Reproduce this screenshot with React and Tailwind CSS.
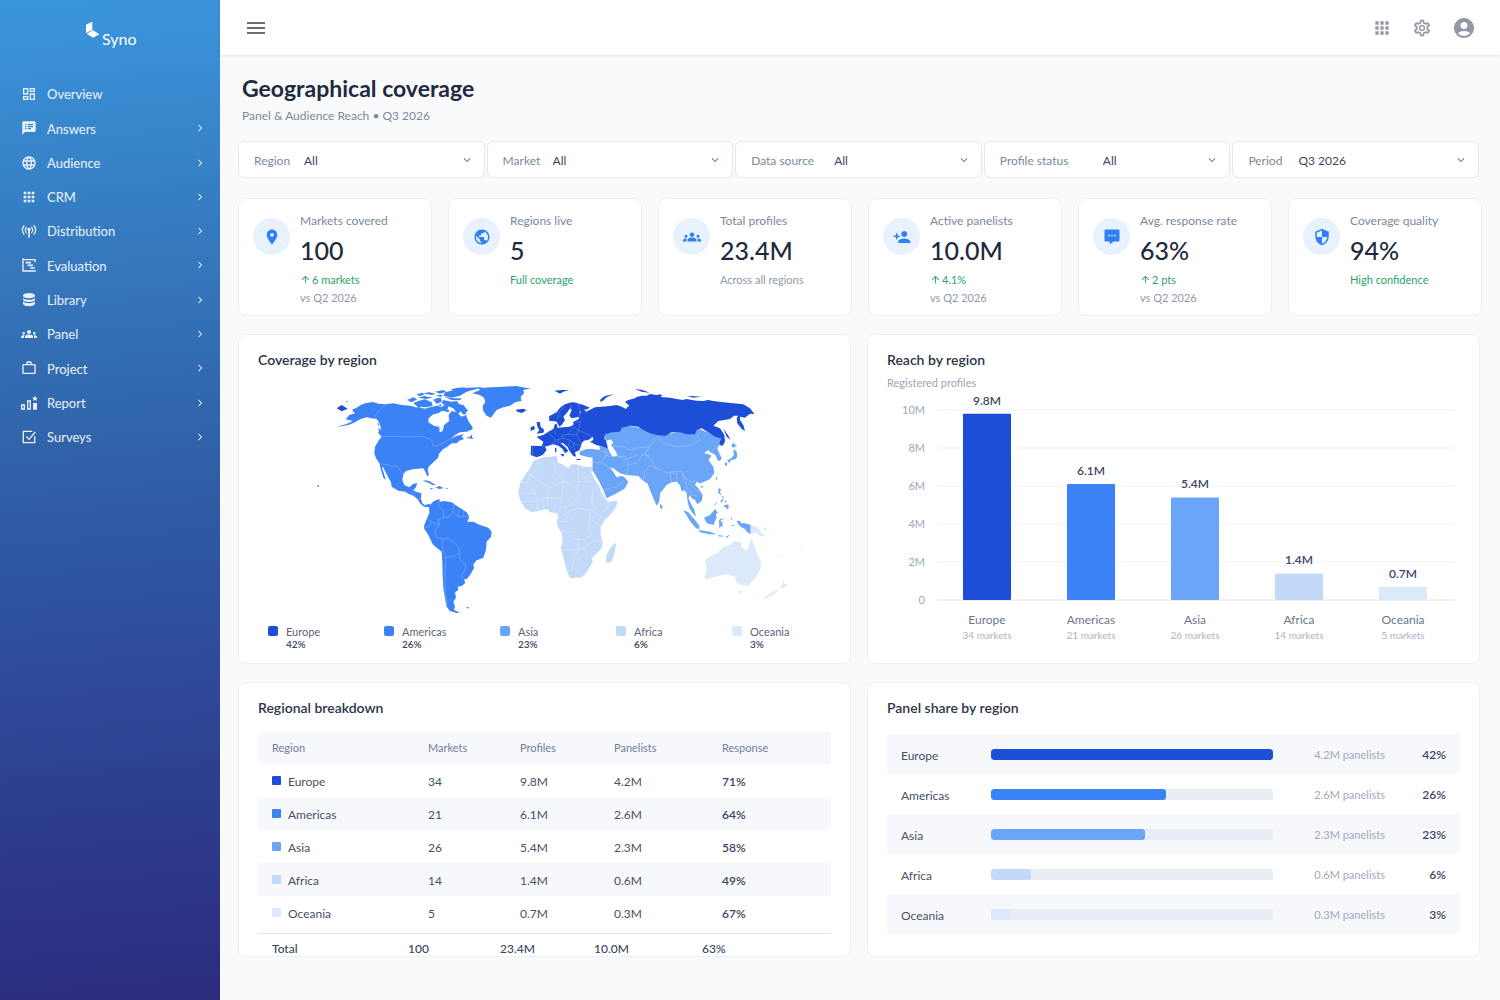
import { Fragment } from "react";
import {
  MdAccountCircle,
  MdApps,
  MdArrowUpward,
  MdChevronRight,
  MdGroups,
  MdKeyboardArrowDown,
  MdLanguage,
  MdLocationOn,
  MdMenu,
  MdOutlineDashboard,
  MdOutlineSettings,
  MdPersonAdd,
  MdPublic,
  MdSecurity,
  MdSpeakerNotes,
  MdWorkOutline
} from "react-icons/md";

// Icons that the Material set does not have
const IconDistribution = ({ className }) => (
  <svg className={className} viewBox="0 0 24 24" fill="none" stroke="currentColor" strokeWidth="1.8" strokeLinecap="round">
    <path d="M4.500 4C1.500 8 1.500 13 4.500 17M19.500 4c3 4 3 9 0 13M8 6.500c-1.800 2.500-1.800 5.500 0 8M16 6.500c1.800 2.500 1.800 5.500 0 8" />
    <circle cx="12" cy="9.500" r="1.600" fill="currentColor" />
    <path d="M12 10v11" strokeWidth="2.400" />
  </svg>
);

const IconEvaluation = ({ className }) => (
  <svg className={className} viewBox="0 0 24 24" fill="none" stroke="currentColor" strokeWidth="2">
    <path d="M3 2v19h19M3 4h18v4" />
    <path d="M7 8.500h8M10 12.500h8M14 16.500h7" strokeWidth="2.600" />
  </svg>
);

const IconLibrary = ({ className }) => (
  <svg className={className} viewBox="0 0 24 24" fill="currentColor">
    <ellipse cx="12" cy="5.500" rx="9" ry="4" />
    <path d="M3 8.500c1.500 4 16.500 4 18 0v3c-1.500 4.500-16.500 4.500-18 0zM3 14c1.500 4 16.500 4 18 0v3.500c-1.500 5-16.500 5-18 0z" />
  </svg>
);

const IconReport = ({ className }) => (
  <svg className={className} viewBox="0 0 24 24" fill="none" stroke="currentColor" strokeWidth="2">
    <path d="M1 15h4v6H1zM10 9h4v12h-4z" />
    <path d="M18 12h6v10h-6z" fill="currentColor" stroke="none" />
    <path d="M21 1l1.300 2.800 3 .3-2.300 2 .7 3-2.700-1.600L18.300 9l.7-3-2.300-2 3-.3z" fill="currentColor" stroke="none" />
  </svg>
);

const IconSurveys = ({ className }) => (
  <svg className={className} viewBox="0 0 24 24" fill="none" stroke="currentColor" strokeWidth="2">
    <path d="M17 3.500H3.500v17h17V11" />
    <path d="M8 11l4 4.500 9.500-11" />
  </svg>
);

const IconBubble = ({ className }) => (
  <svg className={className} viewBox="0 0 24 24" fill="currentColor">
    <path
      fillRule="evenodd"
      d="M3.500 2h17A1.500 1.500 0 0 1 22 3.500v13a1.500 1.500 0 0 1-1.500 1.500H14l-5 4v-4H3.500A1.500 1.500 0 0 1 2 16.500v-13A1.500 1.500 0 0 1 3.500 2zM7 9v2h2V9zm4 0v2h2V9zm4 0v2h2V9z"
    />
  </svg>
);

const navItems = [
  { label: "Overview", icon: MdOutlineDashboard, leaf: true },
  { label: "Answers", icon: MdSpeakerNotes },
  { label: "Audience", icon: MdLanguage },
  { label: "CRM", icon: MdApps },
  { label: "Distribution", icon: IconDistribution },
  { label: "Evaluation", icon: IconEvaluation },
  { label: "Library", icon: IconLibrary },
  { label: "Panel", icon: MdGroups },
  { label: "Project", icon: MdWorkOutline },
  { label: "Report", icon: IconReport },
  { label: "Surveys", icon: IconSurveys }
];

const filters = [
  { id: "region", label: "Region", value: "All", slot: "w-[50px]" },
  { id: "market", label: "Market", value: "All", slot: "w-[50px]" },
  { id: "source", label: "Data source", value: "All", slot: "w-[83px]" },
  { id: "status", label: "Profile status", value: "All", slot: "w-[103px]" },
  { id: "period", label: "Period", value: "Q3 2026", slot: "w-[50px]" }
];

const kpis = [
  { label: "Markets covered", value: "100", icon: MdLocationOn, delta: "6 markets", note: "vs Q2 2026" },
  { label: "Regions live", value: "5", icon: MdPublic, status: "Full coverage" },
  { label: "Total profiles", value: "23.4M", icon: MdGroups, note: "Across all regions" },
  { label: "Active panelists", value: "10.0M", icon: MdPersonAdd, delta: "4.1%", note: "vs Q2 2026" },
  { label: "Avg. response rate", value: "63%", icon: IconBubble, delta: "2 pts", note: "vs Q2 2026" },
  { label: "Coverage quality", value: "94%", icon: MdSecurity, status: "High confidence" }
];

const regions = [
  { name: "Europe", markets: 34, profiles: 9.8, panelists: "4.2M", response: "71%", share: 42, bg: "bg-[#1d4ed8]", fill: "fill-[#1d4ed8]" },
  { name: "Americas", markets: 21, profiles: 6.1, panelists: "2.6M", response: "64%", share: 26, bg: "bg-[#3b82f6]", fill: "fill-[#3b82f6]" },
  { name: "Asia", markets: 26, profiles: 5.4, panelists: "2.3M", response: "58%", share: 23, bg: "bg-[#6ba5f8]", fill: "fill-[#6ba5f8]" },
  { name: "Africa", markets: 14, profiles: 1.4, panelists: "0.6M", response: "49%", share: 6, bg: "bg-[#c3d9f9]", fill: "fill-[#c3d9f9]" },
  { name: "Oceania", markets: 5, profiles: 0.7, panelists: "0.3M", response: "67%", share: 3, bg: "bg-[#dce9fb]", fill: "fill-[#dce9fb]" }
];

// Land outlines, one path per region
const land = {
  americas:
    "M107 133L118 120 135 115 126 105 145 95 152 90 165 85 190 81 205 86 225 88 250 85 275 90 300 92 318 97 330 98 345 101 360 97 380 92 395 96 405 88 415 95 412 105 395 108 385 115 370 118 356 130 355 142 372 152 388 156 389 172 398 168 402 150 418 138 416 120 425 108 440 112 455 125 468 120 475 138 487 155 488 163 470 170 450 172 435 180 425 190 440 182 462 178 455 185 462 192 448 197 440 205 425 205 412 215 400 222 388 235 384 248 370 262 356 275 353 285 357 300 352 304 346 290 340 280 325 281 312 282 300 285 288 288 280 298 277 315 283 330 298 337 308 328 322 324 317 338 310 345 318 350 334 355 333 372 337 385 345 391 358 386 362 395 350 397 340 394 330 385 322 372 310 362 298 358 285 350 265 347 245 335 243 322 232 302 219 275 216 278 222 296 228 315 220 308 213 285 208 264 198 250 193 235 195 215 207 195 215 185 204 173 213 160 208 145 200 132 185 130 170 127 150 133 135 142 115 150 95 154 80 155 110 147 128 138Z" +
    "M400 75L425 80 440 78 448 88 460 90 475 108 466 112 470 118 458 118 452 109 445 116 436 108 430 100 410 92 395 85ZM310 84L325 78 345 73 365 82 368 92 350 97 335 95 326 98ZM291 75L310 67 322 73 305 82ZM400 62L405 52 430 46 420 42 460 39 520 36 500 42 480 47 470 50 450 62 425 68ZM325 68L345 62 352 66 370 66 350 72ZM370 74L380 70 392 68 396 80 380 86ZM338 55L358 52 378 56 365 60ZM375 50L400 45 408 50 390 56ZM376 62L394 59 396 66ZM398 98L410 100 420 108 412 112 400 106ZM320 58L338 53 342 60 328 63ZM382 90L396 88 392 94ZM402 66L430 70 455 70 450 76 425 75ZM425 42L445 38 470 37 450 41ZM202 140L208 150 204 152ZM205 156L210 164 206 168Z" +
    "M487 55L510 45 505 40 545 37 580 35 620 33 645 38 662 40 640 45 642 55 632 65 634 78 615 82 600 92 575 98 560 105 550 118 543 128 530 122 520 108 518 92 526 82 522 68 510 60ZM468 188L480 186 485 178 487 188 491 193ZM338 318L348 316 360 320 378 330 368 330 350 321ZM376 338L388 333 400 339 390 342ZM360 340h8v3h-8zM407 340h6v2h-6zM22 331h5v4h-5zM469 697h8v3h-8zM356 318h4v3h-4zM108 78h6v2h-6z" +
    "M357 392L372 378 388 372 390 380 402 378 425 382 440 392 455 402 470 412 478 425 472 440 490 440 510 450 535 458 545 470 543 485 530 500 528 525 520 548 500 556 490 568 492 580 480 600 470 612 463 612 465 625 455 633 443 635 445 645 435 652 438 668 430 680 435 695 432 705 450 713 440 714 420 708 410 695 405 670 400 640 398 600 397 560 395 530 380 518 368 508 355 480 342 460 343 450 350 432 358 415Z",
  africa:
    "M675 255L700 247 740 243 743 255 742 262 760 270 775 280 785 268 800 268 820 275 845 276 847 285 843 292 855 315 868 335 875 355 888 372 895 380 923 377 918 395 905 415 885 435 872 455 872 480 878 505 875 520 855 540 846 549 848 560 840 575 828 595 815 607 780 610 772 590 765 570 760 545 752 520 758 495 755 475 743 455 740 440 745 425 740 415 720 412 710 402 685 408 665 412 645 400 630 375 625 355 630 325 645 300 660 280 668 262ZM887 560L890 540 900 520 915 503 918 510 912 540 903 562 892 563Z",
  asia:
    "M808 230L835 220 870 225 868 212 893 218 890 200 880 180 935 150 1000 160 1070 178 1160 160 1230 185 1230 205 1222 222 1235 250 1230 258 1222 255 1218 242 1206 233 1200 232 1195 225 1182 235 1195 238 1205 242 1195 255 1210 275 1213 295 1200 312 1180 322 1170 325 1160 320 1155 330 1165 340 1178 360 1175 378 1162 388 1155 375 1145 370 1140 360 1135 370 1145 390 1153 405 1158 425 1150 418 1138 400 1133 380 1130 355 1122 345 1115 350 1110 330 1100 320 1085 322 1070 330 1050 355 1048 380 1040 392 1030 370 1018 340 1012 325 1000 318 985 303 950 300 930 295 910 280 900 278 910 290 920 307 933 303 942 305 955 320 945 340 920 355 890 370 880 345 865 315 847 285 848 262 848 248 830 245 810 240Z" +
    "M1264 210L1272 203 1275 210 1282 212 1268 218ZM1272 222L1280 230 1282 243 1278 252 1265 255 1256 260 1250 258 1265 248 1272 240 1270 230ZM1244 262L1252 264 1250 273 1246 272ZM1254 260L1262 259 1258 264ZM1217 305L1222 308 1219 318ZM1172 333L1180 333 1175 340ZM1225 340L1233 342 1230 352 1236 360 1225 355ZM1234 362L1242 366 1238 370ZM1230 382L1236 373 1242 372 1236 380ZM1244 374L1250 380 1246 384ZM1238 394L1246 390 1255 388 1256 400 1250 403 1248 397ZM1208 395L1222 380 1220 386ZM1050 385L1058 395 1055 403 1050 398ZM1120 405L1135 412 1155 435 1168 452 1168 462 1158 460 1140 438ZM1165 465L1180 467 1200 470 1220 478 1200 478 1170 472ZM1225 480L1240 482 1238 485 1225 484ZM1246 486L1260 478 1252 488ZM1182 428L1200 420 1215 402 1223 412 1218 418 1220 428 1210 450 1190 445ZM1227 435L1232 432 1245 430 1233 436 1232 441 1240 440 1236 446 1240 456 1234 452 1228 460ZM1264 425L1267 436 1262 432ZM1262 450L1276 450 1268 453ZM1280 438L1290 437 1293 445 1302 444 1322 450 1322 478 1312 472 1305 462 1293 456 1286 449Z",
  europe:
    "M662 240L663 212 695 213 700 200 685 190 680 185 700 180 715 170 730 162 735 147 741 148 742 158 760 157 778 155 790 150 790 140 806 132 812 110 800 90 815 88 840 98 828 104 822 102 828 110 840 104 855 97 875 95 900 93 920 90 935 95 948 102 952 96 958 92 945 80 955 75 975 70 980 66 995 62 1010 62 1020 57 1040 60 1050 58 1058 62 1050 66 1080 68 1100 72 1120 75 1128 72 1160 77 1180 78 1195 75 1210 78 1240 82 1270 85 1300 88 1320 100 1333 117 1322 116 1315 120 1305 128 1290 125 1290 135 1300 150 1305 168 1295 162 1282 145 1280 130 1285 122 1272 122 1260 132 1225 138 1210 152 1230 160 1243 180 1245 200 1238 212 1228 210 1232 190 1215 185 1200 175 1175 160 1160 165 1155 178 1130 178 1110 172 1085 172 1065 183 1040 180 1020 175 1000 165 985 155 960 152 935 158 930 170 905 172 885 178 882 190 895 205 893 220 870 212 850 210 840 200 850 195 848 185 835 195 820 198 812 215 808 226 795 232 798 245 790 243 780 230 772 215 760 205 750 203 765 215 775 228 765 235 758 222 745 212 730 208 715 212 705 215 710 225 698 240 680 247 670 243Z" +
    "M718 138L717 124 740 112 750 98 765 88 785 82 800 83 815 90 810 110 810 125 785 130 778 122 785 105 780 100 772 112 760 125 765 135 755 150 748 155 740 140 730 138ZM680 140L690 142 692 155 703 165 700 173 680 176 688 165 682 155ZM662 157L672 152 675 162 662 168ZM617 104L640 101 650 106 635 114 622 110ZM733 47L755 45 778 45 760 50 750 56 742 52ZM870 80L872 72 885 63 912 57 890 67 878 78ZM975 42L995 44 1020 53 995 50ZM1130 62L1175 65 1150 68ZM1240 160L1255 182 1262 195 1250 185ZM80 100L95 90 113 101 95 109ZM735 218h4v14h-4zM750 238L763 237 760 245ZM800 252h12v3h-12z",
  oceania:
    "M1185 555L1200 545 1225 532 1240 515 1260 510 1272 498 1295 503 1293 515 1310 528 1318 510 1324 490 1335 515 1342 540 1353 560 1350 585 1335 610 1315 632 1295 630 1280 622 1275 605 1250 597 1215 605 1190 612 1183 608 1190 590ZM1284 650L1298 646 1292 656ZM1419 614L1424 626 1432 630 1416 641 1410 637 1418 628ZM1404 643L1396 655 1380 663 1366 671 1361 667 1382 655ZM1322 450L1345 458 1350 468 1365 485 1350 482 1340 474 1322 478ZM1355 464L1372 457 1366 466ZM1472 524L1485 518 1478 525ZM1410 540L1418 544 1412 545ZM1380 470L1392 478 1384 475Z"
};

const seas =
  "M888 197L903 193 910 203 903 210 918 230 922 243 908 245 898 230 893 215ZM814 206L825 196 840 200 866 214 845 222 816 222Z";

const borders = {
  americas:
    "M218 184L340 185 365 195 370 215 400 205 415 195 440 182M193 125L222 92M193 125L210 145M213 266L235 270 245 275 258 272 268 283 278 297M308 345L305 360M318 352L312 362M333 372L322 372M388 374L385 395 400 405 402 428 420 425 430 410 432 385M402 428L385 432 388 450 375 465 378 485 397 492 415 490 435 505 447 520 448 535 430 545 407 548 398 525 397 492M407 548L405 600 405 650 412 690M448 535L450 555 468 570 465 585 455 600 458 612M350 432L365 440 388 450M345 458L358 455 365 440M430 410L445 425 478 425M447 402L445 425M460 405L460 425",
  africa:
    "M628 322L650 322 660 300 675 290 685 275 680 258M660 300L720 340 760 318M730 255L740 290 760 318 800 340M800 340L805 320 805 270M805 320L850 320M650 322L675 355 630 355M675 355L680 380 710 365 720 340M760 318L758 350 755 370 710 368M640 380L665 378 680 380 683 408M700 372L700 404M712 368L715 405M800 340L805 365 790 385 805 400 840 405M755 370L750 400 745 425M755 425L780 405 805 400M740 440L765 440 778 410M755 468L785 470 790 490 805 495 805 525 758 525M840 405L838 430 835 455 845 480 825 490 805 495M840 405L865 420 885 435M850 340L845 380 855 400M838 430L872 455M865 355L885 370 900 390 880 410M805 525L825 515 845 500 875 500M805 525L790 560 785 580M790 560L830 540 825 520M790 385L760 400",
  asia:
    "M900 215L940 215 960 225 985 218 1020 215 1038 190M1040 182L1060 205 1100 215 1140 212 1170 195 1160 178M1020 215L1005 235 1025 255 1040 280 1070 293 1095 290 1115 290 1125 310 1145 320 1160 318M920 245L945 245 955 270 950 300M955 270L985 262 995 240 1020 240M1000 318L1005 290 1020 270 1040 280M848 262L875 262 890 240 900 245M875 262L900 280M885 228L890 245M880 345L920 335 940 320M1085 322L1080 295 1100 295 1102 320M1115 290L1130 330 1132 355M1135 325L1160 345 1170 350M905 218L940 255 985 240M1138 340L1150 360 1165 365M870 225L895 235M1205 228L1222 215",
  europe:
    "M695 213L712 216M668 215L668 240M715 172L728 185 738 195 728 208M735 165L735 178M738 195L760 190 755 180 775 178 790 155M760 190L780 195 790 205 812 212M775 178L800 180 805 165 820 172 845 185M790 155L805 165 812 140 795 140M800 180L810 200M745 192L745 205M780 195L775 212 790 220M742 132L748 110 765 95M785 100L782 90M802 85L810 110 808 125M790 205L795 225"
};

function Sidebar() {
  return (
    <aside className="w-[220px] shrink-0 bg-[linear-gradient(175deg,#3b96dc_0%,#3579bf_25%,#3061a8_46%,#2e4796_70%,#2c2b7d_100%)] text-white">
      <div className="flex h-[78px] items-start pl-[85px] pt-[21px]">
        <svg className="h-[17px] w-[15px]" viewBox="0 0 45 51" fill="currentColor">
          <path d="M3 11L22 2v25L3 36z" />
          <path d="M5 38l19-10 19 12-19 10z" />
        </svg>
        <span className="mt-2 pl-0.5 text-base leading-5">Syno</span>
      </div>
      <nav className="flex h-[377px] flex-col">
        {navItems.map(({ label, icon: Icon, leaf }) => (
          <a key={label} href="#" className="flex flex-1 items-center pl-[21px] pr-[13px] text-[13px] text-white/90">
            <Icon className="mb-0.5 mr-2.5 size-4 shrink-0" />
            <span className="flex-1">{label}</span>
            {!leaf && <MdChevronRight className="mb-0.5 size-3.5 opacity-80" />}
          </a>
        ))}
      </nav>
    </aside>
  );
}

function TopBar() {
  return (
    <header className="flex h-[55px] items-center justify-between bg-white px-6 text-[#9498a5] shadow-[0_1px_3px_rgba(15,23,42,0.1)]">
      <button type="button" aria-label="Toggle menu" className="text-[#686d78]">
        <MdMenu className="size-6" />
      </button>
      <div className="flex items-center gap-5">
        <button type="button" aria-label="Apps">
          <MdApps className="size-5" />
        </button>
        <button type="button" aria-label="Settings">
          <MdOutlineSettings className="size-5" />
        </button>
        <button type="button" aria-label="Account">
          <MdAccountCircle className="size-6" />
        </button>
      </div>
    </header>
  );
}

function Filter({ id, label, value, slot }) {
  return (
    <div className="flex h-[37px] items-center rounded-md border border-[#e4e9f0] bg-white pl-[15px] text-xs">
      <label htmlFor={id} className={`${slot} shrink-0 pt-0.5 text-[#7c889b]`}>
        {label}
      </label>
      <div className="relative min-w-0 flex-1">
        <select id={id} defaultValue={value} className="w-full appearance-none bg-transparent pt-0.5 text-[#3b4663] outline-none">
          <option>{value}</option>
        </select>
        <MdKeyboardArrowDown className="pointer-events-none absolute right-2.5 top-0.5 size-3.5 text-[#7c889b]" />
      </div>
    </div>
  );
}

function Kpi({ label, value, icon: Icon, delta, status, note }) {
  return (
    <div className="flex h-[118px] gap-2.5 rounded-lg border border-[#edf0f5] bg-white pl-3.5 pt-3.5">
      <span className="mt-[5px] flex size-[37px] items-center justify-center rounded-full bg-[#e8f1fe] text-[#2f80f5]">
        <Icon className="size-[18px]" />
      </span>
      <div className="text-[11px] text-[#9099ab]">
        <div className="text-xs leading-4 text-[#7c889b]">{label}</div>
        <div className="mb-[3px] text-[25px] font-medium leading-[42px] text-[#1e2a3d]">{value}</div>
        {(delta || status) && (
          <div className="flex items-center text-[#27a567]">
            {delta && <MdArrowUpward className="mr-px size-[11px]" />}
            <span className="leading-[11px]">{delta || status}</span>
          </div>
        )}
        {note && <div className={delta ? "mt-1.5 leading-[13px]" : "leading-[11px]"}>{note}</div>}
      </div>
    </div>
  );
}

function Panel({ title, className = "", children }) {
  return (
    <section className={`overflow-hidden rounded-lg border border-[#edf0f5] bg-white px-[19px] pt-4 ${className}`}>
      <h2 className="text-sm font-semibold leading-[18px] text-[#2a3548]">{title}</h2>
      {children}
    </section>
  );
}

function WorldMap() {
  return (
    <svg viewBox="-156 0 1719 732" className="mt-1.5 w-full" role="img" aria-label="World map of coverage">
      <path d={land.africa} className="fill-[#c3d9f9]" />
      <path d={land.asia} className="fill-[#6ba5f8]" />
      <path d={land.oceania} className="fill-[#dce9fb]" />
      <path d={land.americas} className="fill-[#3b82f6]" />
      <path d={land.europe} className="fill-[#1d4ed8]" />
      <path d={seas} fill="#fff" />
      <g fill="none" stroke="#fff" strokeWidth="1.6" strokeLinejoin="round">
        <path d={borders.africa} opacity=".5" />
        <path d={borders.asia} opacity=".4" />
        <path d={borders.americas} opacity=".4" />
        <path d={borders.europe} opacity=".35" />
      </g>
    </svg>
  );
}

function ReachChart() {
  const base = 207;
  const scale = 19; // px per million
  return (
    <svg viewBox="0 0 573 254" className="mt-0.5 w-full" role="img" aria-label="Registered profiles by region">
      {[10, 8, 6, 4, 2, 0].map((tick) => (
        <g key={tick}>
          <line x1="50" x2="568" y1={base - tick * scale} y2={base - tick * scale} stroke={tick ? "#f5f6f8" : "#e9ebef"} strokeWidth="1.5" />
          <text x="38" y={base - tick * scale + 4} textAnchor="end" fontSize="11" fill="#9ba6b8">
            {tick ? `${tick}M` : "0"}
          </text>
        </g>
      ))}
      {regions.map((r, i) => {
        const x = 100 + i * 104;
        const h = r.profiles * scale;
        return (
          <Fragment key={r.name}>
            <rect x={x - 24} y={base - h} width="48" height={h} rx="1" className={r.fill} />
            <text x={x} y={base - h - 9} textAnchor="middle" fontSize="12" fontWeight="600" fill="#3b4663">
              {r.profiles}M
            </text>
            <text x={x} y="231" textAnchor="middle" fontSize="12" fill="#6b7789">
              {r.name}
            </text>
            <text x={x} y="246" textAnchor="middle" fontSize="10" fill="#a9b3c3">
              {r.markets} markets
            </text>
          </Fragment>
        );
      })}
    </svg>
  );
}

function BreakdownTable() {
  return (
    <table className="mt-[15px] w-full table-fixed text-left text-xs text-[#465065]">
      <colgroup>
        <col className="w-[150px]" />
        <col className="w-[92px]" />
        <col className="w-[94px]" />
        <col className="w-[108px]" />
        <col />
      </colgroup>
      <thead>
        <tr className="h-8 bg-[#f6f8fc] text-[11px] text-[#718096]">
          <th className="rounded-l pl-3.5 font-normal">Region</th>
          <th className="pl-5 font-normal">Markets</th>
          <th className="pl-5 font-normal">Profiles</th>
          <th className="pl-5 font-normal">Panelists</th>
          <th className="rounded-r pl-5 font-normal">Response</th>
        </tr>
      </thead>
      <tbody>
        {regions.map((r) => (
          <tr key={r.name} className="h-[33px] even:bg-[#f6f8fc]">
            <td className="pl-3.5">
              <span className="flex items-center gap-[7px]">
                <span className={`size-[9px] rounded-[1px] ${r.bg}`} />
                <span className="pt-0.5">{r.name}</span>
              </span>
            </td>
            <td className="pl-5 pt-0.5">{r.markets}</td>
            <td className="pl-5 pt-0.5">{r.profiles}M</td>
            <td className="pl-5 pt-0.5">{r.panelists}</td>
            <td className="pl-5 pt-0.5 font-semibold text-[#3b4663]">{r.response}</td>
          </tr>
        ))}
      </tbody>
      <tbody>
        <tr className="h-1" />
      </tbody>
      <tfoot>
        <tr className="h-8 border-t border-[#dfe3ea] font-medium text-[#3b4663]">
          <td className="pl-3.5">Total</td>
          <td>100</td>
          <td>23.4M</td>
          <td>10.0M</td>
          <td>63%</td>
        </tr>
      </tfoot>
    </table>
  );
}

function PanelShare() {
  const max = regions[0].share;
  return (
    <ul className="mt-[17px]">
      {regions.map((r) => (
        <li key={r.name} className="flex h-10 items-center px-3.5 text-xs odd:bg-[#f6f8fc]">
          <span className="w-[90px] pt-1 text-[#465065]">{r.name}</span>
          <div className="h-[11px] flex-1 overflow-hidden rounded-[3px] bg-[#e9edf4]">
            <div className={`h-full rounded-[3px] ${r.bg}`} style={{ width: `${(r.share / max) * 100}%` }} />
          </div>
          <span className="w-28 pt-0.5 text-right text-[11px] text-[#a0a9b9]">{r.panelists} panelists</span>
          <span className="w-[61px] pt-0.5 text-right font-semibold text-[#3b4663]">{r.share}%</span>
        </li>
      ))}
    </ul>
  );
}

export default function App() {
  return (
    <div className="flex min-h-screen bg-[#f9fafc] font-['Lato',sans-serif]">
      <Sidebar />
      <div className="min-w-0 flex-1">
        <TopBar />
        <main className="px-[18px] pb-8 pt-[19px]">
          <div className="pl-1">
            <h1 className="text-[23px] font-bold leading-7 text-[#1e2a3d]">Geographical coverage</h1>
            <p className="mt-[5px] text-xs leading-[18px] text-[#7c889b]">Panel &amp; Audience Reach • Q3 2026</p>
          </div>

          <div className="mt-4 grid grid-cols-5 gap-0.5 pr-[3px]">
            {filters.map((f) => (
              <Filter key={f.id} {...f} />
            ))}
          </div>

          <div className="mt-5 grid grid-cols-6 gap-4">
            {kpis.map((k) => (
              <Kpi key={k.label} {...k} />
            ))}
          </div>

          <div className="mt-[18px] grid grid-cols-2 gap-x-4 gap-y-[18px] pr-0.5">
            <Panel title="Coverage by region" className="pb-3">
              <WorldMap />
              <ul className="-mr-[17px] mt-1.5 grid grid-cols-5 pl-2.5 text-[11px] leading-[13px] text-[#5a6578]">
                {regions.map((r) => (
                  <li key={r.name} className="flex gap-2">
                    <span className={`mt-px size-2.5 rounded-xs ${r.bg}`} />
                    <span>
                      {r.name}
                      <span className="block text-[10px] font-semibold text-[#3b4663]">{r.share}%</span>
                    </span>
                  </li>
                ))}
              </ul>
            </Panel>
            <Panel title="Reach by region">
              <p className="mt-1.5 text-[11px] leading-4 text-[#9ba6b8]">Registered profiles</p>
              <ReachChart />
            </Panel>
            <Panel title="Regional breakdown" className="h-[275px]">
              <BreakdownTable />
            </Panel>
            <Panel title="Panel share by region" className="h-[275px]">
              <PanelShare />
            </Panel>
          </div>
        </main>
      </div>
    </div>
  );
}
